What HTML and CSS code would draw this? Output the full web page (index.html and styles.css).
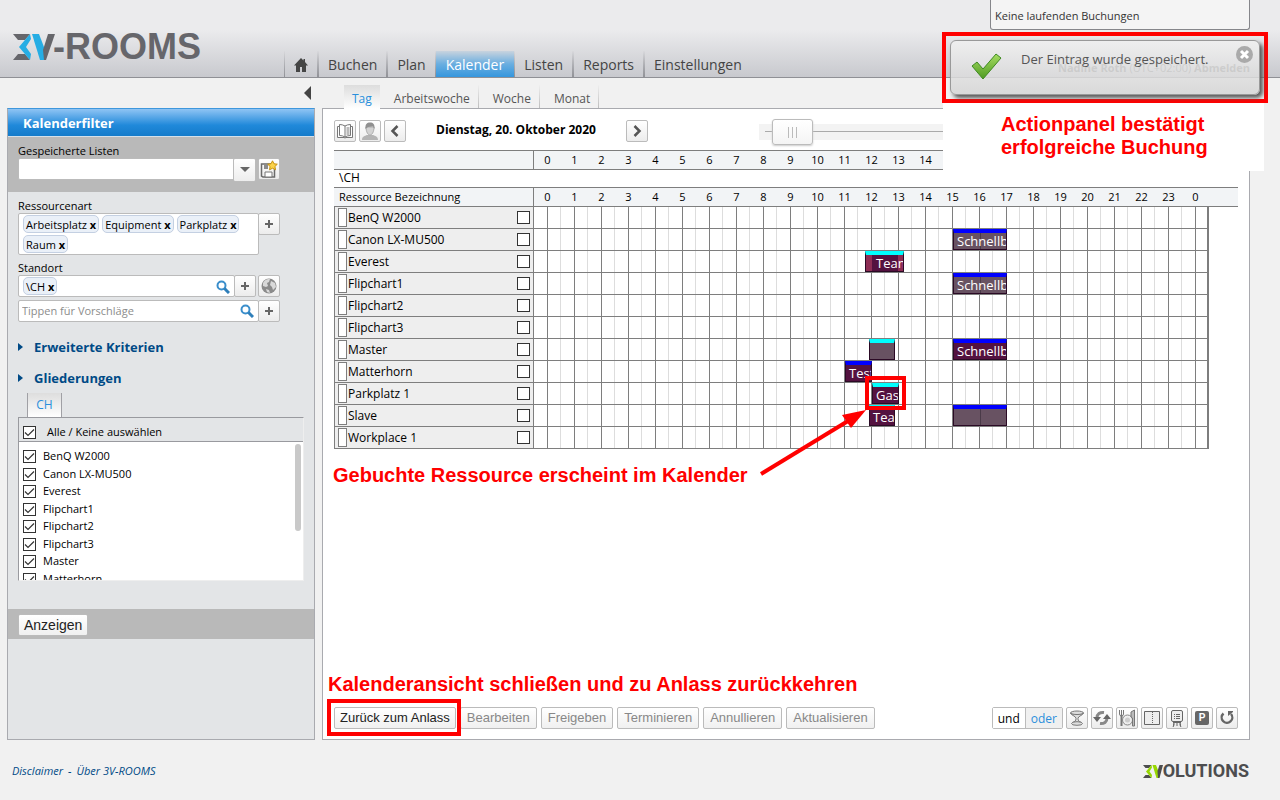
FILE: index.html
```html
<!DOCTYPE html>
<html lang="de">
<head>
<meta charset="utf-8">
<title>3V-ROOMS – Kalender</title>
<link rel="stylesheet" href="styles.css">
</head>
<body>
<header class="top">
  <a class="logo" href="#" aria-label="3V-ROOMS">
    <svg width="42" height="26" viewBox="0 0 42 26" aria-hidden="true">
      <path fill="#66666b" d="M0 0h17l-5 6H5zM0 26h17l-5-6H5z"/>
      <path fill="#26ade4" d="M17 0 6 13l11 13 1-6-5-7 5-8z"/>
      <path fill="#26ade4" d="M19 0h7l8 21-2 5h-5z"/>
      <path fill="#66666b" d="M35 0h7l-9 26h-2l-1-10z"/>
    </svg><span class="logo-text">-ROOMS</span>
  </a>
  <nav class="nav">
    <a class="nav-item nav-home" href="#" aria-label="Start"><svg width="14" height="14" viewBox="0 0 14 14"><path fill="#454545" d="M7 0 0 7.500h2V14h4V9h2v5h4V7.500h2L11 4V1H9.500v1.500z"/></svg></a>
    <a class="nav-item" href="#">Buchen</a>
    <a class="nav-item" href="#">Plan</a>
    <a class="nav-item active" href="#">Kalender</a>
    <a class="nav-item" href="#">Listen</a>
    <a class="nav-item" href="#">Reports</a>
    <a class="nav-item" href="#">Einstellungen</a>
  </nav>
  <div class="status">Keine laufenden Buchungen</div>
  <div class="user"><b>Nadine Roth</b> (UTC+02:00) <b>Abmelden</b></div>
</header>

<div class="work">
  <aside class="side">
    <button class="collapse" aria-label="Filter einklappen"></button>
    <div class="panel filter">
      <h2 class="filter-title">Kalenderfilter</h2>
      <div class="band saved">
        <label class="label" for="lists">Gespeicherte Listen</label>
        <div class="row">
          <span class="pick"><select id="lists"><option></option></select></span>
          <button class="icon-btn" aria-label="Liste speichern"><svg width="18" height="18" viewBox="0 0 18 18"><path fill="none" stroke="#6a6a6a" stroke-width="1.500" d="M11 4H1.500v12L3 17h11.500V8"/><path fill="#8b8b8b" d="M4 4h4v5H4z"/><path fill="#fff" stroke="#777" d="M5 12h7v5H5z"/><path fill="#fbd34a" stroke="#c8920f" d="m12.500.8 1.500 3 3.300.4-2.400 2.300.6 3.300-3-1.600-3 1.600.6-3.300-2.400-2.300 3.300-.4z"/></svg></button>
        </div>
      </div>
      <div class="fields">
        <span class="label">Ressourcenart</span>
        <div class="row tight">
          <div class="chips">
            <span class="chip">Arbeitsplatz <button aria-label="Arbeitsplatz entfernen">x</button></span>
            <span class="chip">Equipment <button aria-label="Equipment entfernen">x</button></span>
            <span class="chip">Parkplatz <button aria-label="Parkplatz entfernen">x</button></span>
            <span class="chip">Raum <button aria-label="Raum entfernen">x</button></span>
          </div>
          <button class="icon-btn plus" aria-label="Ressourcenart hinzufügen"></button>
        </div>
        <span class="label">Standort</span>
        <div class="row">
          <div class="join">
            <div class="chips single">
              <span class="chip">\CH <button aria-label="\CH entfernen">x</button></span>
              <svg class="lens" width="14" height="14" viewBox="0 0 14 14"><circle cx="5.500" cy="5.500" r="4" fill="none" stroke="#3a8ecb" stroke-width="2"/><path stroke="#2f7fba" stroke-width="3" d="m8.500 8.500 4.500 4.500"/></svg>
            </div>
            <button class="icon-btn plus" aria-label="Standort hinzufügen"></button>
          </div>
          <button class="icon-btn" aria-label="Karte"><svg width="16" height="16" viewBox="0 0 16 16"><circle cx="8" cy="8" r="7.500" fill="#8b8b8b"/><path fill="#d9d9d9" d="M2 5c2-4 5-4 7-4L8 4 6 5l1 3-2 1-3-1zM10 3l4 2 1 4-3 3-1-3-2-2zM5 11l3 1 1 3-3-1z"/></svg></button>
        </div>
        <div class="row tight suggest">
          <div class="search"><input type="text" aria-label="Suche" placeholder="Tippen für Vorschläge">
          <svg class="lens" width="14" height="14" viewBox="0 0 14 14"><circle cx="5.500" cy="5.500" r="4" fill="none" stroke="#3a8ecb" stroke-width="2"/><path stroke="#2f7fba" stroke-width="3" d="m8.500 8.500 4.500 4.500"/></svg></div>
          <button class="icon-btn plus" aria-label="Hinzufügen"></button>
        </div>
        <button class="fold">Erweiterte Kriterien</button>
        <button class="fold">Gliederungen</button>
        <a class="ch-tab" href="#">CH</a>
        <div class="tree">
          <label class="tree-all"><input type="checkbox" class="check" checked>Alle / Keine auswählen</label>
          <div class="tree-body">
            <ul class="tree-list">
              <li><label><input type="checkbox" class="check" checked>BenQ W2000</label></li>
              <li><label><input type="checkbox" class="check" checked>Canon LX-MU500</label></li>
              <li><label><input type="checkbox" class="check" checked>Everest</label></li>
              <li><label><input type="checkbox" class="check" checked>Flipchart1</label></li>
              <li><label><input type="checkbox" class="check" checked>Flipchart2</label></li>
              <li><label><input type="checkbox" class="check" checked>Flipchart3</label></li>
              <li><label><input type="checkbox" class="check" checked>Master</label></li>
              <li><label><input type="checkbox" class="check" checked>Matterhorn</label></li>
            </ul>
            <span class="thumb"></span>
          </div>
        </div>
      </div>
      <div class="band submit"><button class="btn dark">Anzeigen</button></div>
    </div>
  </aside>

  <main class="main">
    <nav class="tabs">
      <a class="tab active" href="#">Tag</a>
      <a class="tab" href="#">Arbeitswoche</a>
      <a class="tab" href="#">Woche</a>
      <a class="tab" href="#">Monat</a>
    </nav>
    <div class="panel view">
      <div class="tools">
        <button class="icon-btn" aria-label="Buch"><svg width="18" height="16" viewBox="0 0 18 16"><path fill="#fff" stroke="#777" d="M1.500 3.500h2v-2q3 0 5.500 1.500 2.500-1.500 5.500-1.500v2h2v11H10l-1 .5-1-.5H1.500z"/><path stroke="#777" fill="none" d="M9 3v11.500M3.500 3v9.500q3 0 5.500 1.500 2.500-1.500 5.500-1.500V3M10.500 5h3M10.500 7h3M10.500 9h3M10.500 11h3"/></svg></button>
        <button class="icon-btn" aria-label="Person"><svg width="18" height="18" viewBox="0 0 18 18"><path fill="#b4b4b4" d="M1 18c0-4 3-4 5-5h6c2 1 5 1 5 5z"/><path fill="#d2d2d2" stroke="#aaa" d="M5 5c0 5 2 8 4 8s4-3 4-8z"/><path fill="#8f8f8f" d="M4.500 7C4 2 6 .5 9 .5S14 2 13.500 7L12 4.500 7 5z"/></svg></button>
        <button class="icon-btn" aria-label="Zurück"><svg width="10" height="12" viewBox="0 0 10 12"><path fill="none" stroke="#555" stroke-width="2.500" d="M7.500 1 2.500 6l5 5"/></svg></button>
        <h1 class="date">Dienstag, 20. Oktober 2020</h1>
        <button class="icon-btn" aria-label="Weiter"><svg width="10" height="12" viewBox="0 0 10 12"><path fill="none" stroke="#555" stroke-width="2.500" d="m2.500 1 5 5-5 5"/></svg></button>
        <input class="zoom" type="range" min="0" max="100" value="3" aria-label="Zoom">
      </div>

      <div class="hours-head"><span class="head-name"></span><span class="hours"><i>0</i><i>1</i><i>2</i><i>3</i><i>4</i><i>5</i><i>6</i><i>7</i><i>8</i><i>9</i><i>10</i><i>11</i><i>12</i><i>13</i><i>14</i></span></div>
      <div class="site">\CH</div>
      <div class="hours-head"><span class="head-name">Ressource Bezeichnung</span><span class="hours"><i>0</i><i>1</i><i>2</i><i>3</i><i>4</i><i>5</i><i>6</i><i>7</i><i>8</i><i>9</i><i>10</i><i>11</i><i>12</i><i>13</i><i>14</i><i>15</i><i>16</i><i>17</i><i>18</i><i>19</i><i>20</i><i>21</i><i>22</i><i>23</i><i>0</i></span></div>
      <table class="grid">
        <tr><th><label class="res">BenQ W2000<input type="checkbox" class="check"></label></th><td></td></tr>
        <tr><th><label class="res">Canon LX-MU500<input type="checkbox" class="check"></label></th><td><div class="lane"><span class="event faded blue" style="--start:419px;--len:54px">Schnellbuchung</span></div></td></tr>
        <tr><th><label class="res">Everest<input type="checkbox" class="check"></label></th><td><div class="lane"><span class="event buffer cyan" style="--start:331px;--len:39px">Team</span></div></td></tr>
        <tr><th><label class="res">Flipchart1<input type="checkbox" class="check"></label></th><td><div class="lane"><span class="event faded blue" style="--start:419px;--len:54px">Schnellbuchung</span></div></td></tr>
        <tr><th><label class="res">Flipchart2<input type="checkbox" class="check"></label></th><td></td></tr>
        <tr><th><label class="res">Flipchart3<input type="checkbox" class="check"></label></th><td></td></tr>
        <tr><th><label class="res">Master<input type="checkbox" class="check"></label></th><td><div class="lane"><span class="event faded cyan" style="--start:335px;--len:26px"></span><span class="event blue" style="--start:419px;--len:54px">Schnellbuchung</span></div></td></tr>
        <tr><th><label class="res">Matterhorn<input type="checkbox" class="check"></label></th><td><div class="lane"><span class="event blue" style="--start:311px;--len:27px">Test</span></div></td></tr>
        <tr><th><label class="res">Parkplatz 1<input type="checkbox" class="check"></label></th><td><div class="lane"><span class="event cyan" style="--start:338px;--len:27px">Gast</span><span class="mark mark-event"></span></div></td></tr>
        <tr><th><label class="res">Slave<input type="checkbox" class="check"></label></th><td><div class="lane"><span class="event cyan" style="--start:335px;--len:26px">Tea</span><span class="event faded blue" style="--start:419px;--len:54px"></span></div></td></tr>
        <tr><th><label class="res">Workplace 1<input type="checkbox" class="check"></label></th><td></td></tr>
      </table>
      <div class="hint-line">
        <p class="hint">Gebuchte Ressource erscheint im Kalender</p>
        <svg class="arrow" width="108" height="68" viewBox="0 0 108 68" aria-hidden="true"><path stroke="#f00" stroke-width="4" d="M1 65 88 12"/><path fill="#f00" d="M106 1 82 6l9 13z"/></svg>
      </div>

      <p class="hint bottom">Kalenderansicht schließen und zu Anlass zurückkehren</p>
      <div class="actions">
        <span class="marked"><button class="btn dark">Zurück zum Anlass</button><span class="mark mark-btn"></span></span>
        <button class="btn">Bearbeiten</button>
        <button class="btn">Freigeben</button>
        <button class="btn">Terminieren</button>
        <button class="btn">Annullieren</button>
        <button class="btn">Aktualisieren</button>
        <span class="toggle"><button>und</button><button class="on">oder</button></span>
        <button class="icon-btn" aria-label="Getränke"><svg width="16" height="16" viewBox="0 0 16 16"><g fill="#ddd" stroke="#777"><ellipse cx="8" cy="3" rx="6.500" ry="2"/><path d="M1.500 3C3 6 7 6 7 8.500S6 11 4 12.500h8C10 11 9 11 9 8.500S13 6 14.500 3C13 5 3 5 1.500 3z"/><ellipse cx="8" cy="13.500" rx="5.500" ry="1.800"/></g></svg></button>
        <button class="icon-btn" aria-label="Wiederholen"><svg width="18" height="16" viewBox="0 0 18 16"><path fill="none" stroke="#888" stroke-width="3" d="M4 8c0-4 3-6 7-5.500M14 8c0 4-3 6-7 5.500"/><path fill="#666" d="M0 7h8l-4 5zM10 9h8l-4-5z"/></svg></button>
        <button class="icon-btn" aria-label="Verpflegung"><svg width="18" height="18" viewBox="0 0 18 18"><path fill="none" stroke="#777" d="M1.500 1v4q0 2 2 2t2-2V1M3.500 1v5"/><path stroke="#777" stroke-width="2" d="M3.500 6v11"/><circle cx="9.500" cy="11" r="5" fill="#eee" stroke="#888"/><circle cx="9.500" cy="11" r="2.500" fill="#ccc"/><path fill="#bbb" stroke="#777" d="M14.500 17V9L13 8V3l3.500-2v16z"/></svg></button>
        <button class="icon-btn" aria-label="Raumteilung"><svg width="16" height="14" viewBox="0 0 16 14"><path fill="#eee" stroke="#666" d="M.5.500h15v13H.5z"/><path stroke="#666" stroke-dasharray="1 1" d="M8.500 1v12"/></svg></button>
        <button class="icon-btn" aria-label="Flipchart"><svg width="12" height="18" viewBox="0 0 12 18"><rect x=".5" y="1.500" width="11" height="11" rx="1.500" fill="#eee" stroke="#666"/><path stroke="#666" d="M2 13.500h8M3 13v3l-1 2M9 13v3l1 2M6 13v4M3 5.500h1M5 5.500h4M3 7.500h1M5 7.500h4M3 9.500h1M5 9.500h4"/></svg></button>
        <button class="icon-btn" aria-label="Parkplatz"><span class="park">P</span></button>
        <button class="icon-btn" aria-label="Zurücksetzen"><svg width="14" height="14" viewBox="0 0 14 14"><path fill="none" stroke="#666" stroke-width="2.400" d="M3.500 2.500a5.300 5.300 0 1 0 7.500.5"/><path fill="#666" d="M8 0h5v1L8 5z"/></svg></button>
      </div>
      <div class="callout">Actionpanel bestätigt<br>erfolgreiche Buchung</div>
    </div>
  </main>
</div>

<footer class="foot">
  <span class="legal"><a href="#">Disclaimer</a><span>-</span><a href="#">Über 3V-ROOMS</a></span>
  <a class="vendor" href="#" aria-label="3VOLUTIONS">
    <svg width="20" height="13" viewBox="0 0 40 26" aria-hidden="true"><path fill="#4d4d4f" d="M0 0h17l-5 6H5zM0 26h17l-5-6H5z"/><path fill="#97d700" d="M17 0 6 13l11 13 1-6-5-7 5-8zM19 0h7l8 21-2 5h-5z"/><path fill="#4d4d4f" d="M33 0h7l-7 26h-3l-1-14z"/></svg><span class="vendor-text">OLUTIONS</span>
  </a>
</footer>

<div class="toast-frame">
  <div class="toast" role="status">
    <svg width="32" height="28" viewBox="0 0 32 28" aria-hidden="true"><defs><linearGradient id="g" x2="0" y2="1"><stop offset="0" stop-color="#a6dd62"/><stop offset="1" stop-color="#4f9a22"/></linearGradient></defs><path fill="url(#g)" stroke="#3f8a22" d="m1 13 5-4 6 7L25 1l5 4-18 21z"/></svg>
    <p>Der Eintrag wurde gespeichert.</p>
    <button class="close" aria-label="Schließen"><svg width="17" height="17" viewBox="0 0 17 17"><circle cx="8.500" cy="8.500" r="8.500" fill="#aaa"/><path stroke="#fff" stroke-width="3" d="m5 5 7 7M12 5l-7 7"/></svg></button>
  </div>
</div>
</body>
</html>
```
FILE: styles.css
```css
* { box-sizing: border-box; }

body {
  margin: 0;
  min-height: 100vh;
  display: flex;
  flex-direction: column;
  position: relative;
  background: #f1f1f1;
  color: #000;
  font: 12px/16px "Open Sans", "Noto Sans", sans-serif;
}

a { color: inherit; text-decoration: none; }
p, h1, h2, ul { margin: 0; padding: 0; }
button { font: inherit; color: inherit; padding: 0; cursor: pointer; }
svg { display: block; flex: none; }

/* Header */
.top {
  height: 78px;
  display: flex;
  align-items: flex-end;
  position: relative;
  padding-left: 13px;
  background: linear-gradient(#ebebed 0, #ebebed 30px, #c8c9ce 77px);
  border-bottom: 1px solid #8f9095;
}
.logo { display: flex; align-items: center; width: 271px; height: 60px; color: #66666b; }
.logo-text { margin-left: -2px; font: bold 36px/40px "Liberation Sans", Arial, sans-serif; }
.nav { display: flex; font-size: 14px; color: #444; }
.nav-item {
  height: 26px;
  padding: 0 9px;
  line-height: 28px;
  border-left: 1px solid #fff;
  border-right: 1px solid #999a9f;
  border-image: linear-gradient(transparent, #8f9095) 1;
}
.nav-item:last-child { border-right: 0; }
.nav-home { padding: 7px 9px 0; }
.nav-item.active { color: #fff; background: linear-gradient(#c8d3de, #6aaee0 50%, #3596dd); border-image: none; border-color: transparent; }
.status {
  position: absolute;
  top: 0;
  right: 30px;
  width: 260px;
  height: 30px;
  padding: 8px 4px;
  font-size: 11px;
  color: #333;
  background: #f4f4f4;
  border: 1px solid #85868a;
  border-top: 0;
  border-radius: 0 0 3px 3px;
}
.user { position: absolute; right: 30px; bottom: 1px; font-size: 11px; color: #555; }

/* Columns */
.work { flex: 1; display: flex; padding: 0 30px 0 7px; gap: 7px; }
.side { width: 308px; display: flex; flex-direction: column; }
.main { flex: 1; min-width: 0; display: flex; flex-direction: column; }
.panel { flex: 1; display: flex; flex-direction: column; border: 1px solid #a9aaaf; }
.collapse {
  align-self: flex-end;
  width: 7px;
  height: 14px;
  margin: 8px 4px;
  border: solid transparent;
  border-width: 7px 7px 7px 0;
  border-right-color: #444;
  background: none;
}

/* Filter */
.filter { background: #e3e5e7; border-top: 1px solid #3e97dc; }
.filter-title {
  height: 28px;
  padding-left: 15px;
  color: #fff;
  font-size: 13px;
  line-height: 29px;
  background: linear-gradient(#8fc4f4, #2089da 60%, #147bca);
  border-bottom: 1px solid #d4e0ea;
}
.band { background: #b9b9b9; padding: 0 10px; }
.saved { height: 55px; padding-top: 5px; }
.label { display: block; height: 16px; line-height: 18px; font-size: 11px; }
.row { display: flex; gap: 2px; align-items: flex-start; }
.row.tight { gap: 0; }
.join { display: flex; }
.pick { position: relative; width: 238px; height: 22px; }
.pick select { appearance: none; width: 100%; height: 22px; border: 1px solid #bbb; border-radius: 2px; background: #fff; }
.pick::before { content: ""; position: absolute; right: 0; top: 0; width: 21px; height: 22px; background: linear-gradient(#fff, #ededed); border: 1px solid #bbb; border-radius: 2px; pointer-events: none; }
.pick::after { content: ""; position: absolute; right: 6px; top: 9px; border: 5px solid transparent; border-top-color: #666; border-bottom: 0; pointer-events: none; }
.icon-btn {
  flex: none;
  width: 22px;
  height: 22px;
  display: flex;
  align-items: center;
  justify-content: center;
  border: 1px solid #bbb;
  border-radius: 2px;
  background: linear-gradient(#fff, #ececec);
}
.plus::before {
  content: "";
  width: 8px;
  height: 8px;
  background: linear-gradient(#666, #666) 50% 50% / 8px 2px no-repeat, linear-gradient(#666, #666) 50% 50% / 2px 8px no-repeat;
}
.fields { padding: 5px 10px 0; }
.chips {
  display: flex;
  flex-wrap: wrap;
  align-content: flex-start;
  gap: 2px 3px;
  width: 241px;
  min-height: 42px;
  padding: 1px 4px;
  background: #fff;
  border: 1px solid #bbb;
  border-radius: 2px;
}
.chips.single { width: 217px; min-height: 22px; height: 22px; justify-content: space-between; }
.chips + .icon-btn { margin-left: -1px; }
.chip {
  height: 18px;
  padding: 0 2px;
  line-height: 17px;
  font-size: 11px;
  background: #eaf0f8;
  border: 1px solid #c4d0e2;
  border-radius: 5px;
}
.chip button { border: 0; background: none; font-weight: bold; line-height: 12px; }
.lens { margin: 3px 0 0; }
.tight + .label { margin-top: 4px; line-height: 17px; }
.suggest { margin-top: 3px; }
.search { display: flex; width: 241px; height: 22px; padding-right: 4px; background: #fff; border: 1px solid #bbb; border-radius: 2px; }
.search + .icon-btn { margin-left: -1px; }
.search input { flex: 1; min-width: 0; border: 0; padding: 0 3px; font: inherit; font-size: 11px; background: none; }
.search input::placeholder { color: #8c8c8c; }
.fold {
  display: flex;
  align-items: center;
  gap: 11px;
  height: 31px;
  border: 0;
  background: none;
  color: #004a86;
  font-weight: bold;
  font-size: 13px;
}
.suggest + .fold { margin-top: 9px; }
.fold::before { content: ""; border: 4px solid transparent; border-left: 5px solid #004a86; border-right: 0; }
.ch-tab {
  display: block;
  width: 35px;
  height: 24px;
  margin-left: 9px;
  color: #2a8fdc;
  line-height: 24px;
  text-align: center;
  background: linear-gradient(#ddd, #fff);
  border: solid #a0a0a5;
  border-width: 0 1px;
}
.tree { width: 286px; height: 164px; border: 1px solid #999a9f; border-right-color: #eee; border-bottom-color: #eee; }
.tree-all { display: flex; align-items: center; gap: 11px; height: 24px; padding: 5px 4px 0; border-bottom: 1px solid #999a9f; font-size: 11px; }
.tree-body { position: relative; height: 138px; padding-top: 5px; overflow: hidden; background: #fff; }
.tree-list { list-style: none; }
.tree-list li { height: 18px; }
.tree-list li:nth-child(even) { height: 17px; }
.tree-list label { display: flex; align-items: center; gap: 7px; height: 18px; padding-left: 4px; font-size: 11px; }
.thumb { position: absolute; top: 2px; right: 2px; width: 6px; height: 87px; border-radius: 3px; background: #c9c9c9; }
.check {
  appearance: none;
  flex: none;
  width: 13px;
  height: 13px;
  margin: 0;
  background: #fff;
  border: 1px solid #333;
}
.check:checked {
  background: #fff url("data:image/svg+xml,%3Csvg xmlns='http://www.w3.org/2000/svg' viewBox='0 0 11 11'%3E%3Cpath fill='none' stroke='%23333' stroke-width='1.2' d='M1 5.500 4 8.500 10 2.500'/%3E%3C/svg%3E") center / 11px 11px no-repeat;
}
.submit { height: 30px; margin-top: 28px; padding-top: 5px; }

/* Buttons */
.btn {
  height: 22px;
  padding: 0 6px;
  font: 13px/20px "Liberation Sans", Arial, sans-serif;
  color: #888;
  background: linear-gradient(#fff, #f0f0f0);
  border: 1px solid #bbb;
  border-radius: 2px;
  white-space: nowrap;
}
.btn.dark { color: #222; padding: 0 5px; }
.submit .btn { font-size: 14px; }

/* View tabs */
.tabs { display: flex; height: 31px; margin-bottom: -1px; padding: 7px 0 0 22px; color: #555; position: relative; z-index: 1; }
.tab { padding: 0 8px; line-height: 27px; margin-left: 6px; border-right: 1px solid #ccc; border-image: linear-gradient(transparent, #bbb) 1; height: 23px; }
.tab.active { margin: 0; height: 24px; color: #2a8fdc; border: 0; background: linear-gradient(#ddd, #fff); }

/* Calendar */
.view { position: relative; padding: 11px 11px 10px; background: #fff; }
.tools { display: flex; gap: 3px; height: 30px; align-items: flex-start; }
.date { width: 214px; text-align: center; font-size: 12px; line-height: 20px; }
.zoom { appearance: none; flex: 1; height: 16px; margin: 4px 0 0 108px; background: linear-gradient(#aaa, #aaa) 6px 7px / 100% 1px no-repeat, #f3f3f3; }
.zoom::-webkit-slider-thumb {
  appearance: none;
  width: 41px;
  height: 26px;
  border: 1px solid #bbb;
  border-radius: 3px;
  background: repeating-linear-gradient(90deg, #bbb 0 1px, transparent 1px 4px) 50% 50% / 9px 11px no-repeat, linear-gradient(#fff, #f4f4f4);
  box-shadow: 0 1px 2px #ccc;
}
.hours-head { display: flex; height: 20px; background: #f2f4f6; border: solid #7e7e7e; border-width: 1px 0; line-height: 17px; font-size: 11px; }
.head-name { width: 200px; padding-left: 5px; border-right: 1px solid #7e7e7e; }
.hours { display: flex; }
.hours i { width: 27px; text-align: center; font-style: normal; }
.site { height: 17px; padding-left: 5px; line-height: 15px; }
.grid { width: 875px; border-collapse: separate; border-spacing: 0; table-layout: fixed; border-left: 1px solid #7e7e7e; border-right: 2px solid #7e7e7e; }
.grid th { width: 199px; height: 22px; padding: 0; font-weight: normal; text-align: left; background: #eee; border: solid #7e7e7e; border-width: 0 1px 1px 0; }
.grid td {
  height: 22px;
  padding: 0;
  vertical-align: top;
  border-bottom: 1px solid #7e7e7e;
  background:
    linear-gradient(90deg, #7e7e7e 1px, transparent 1px) 13px 0 / 27px 100%,
    linear-gradient(90deg, #ddd 1px, transparent 1px) 26px 0 / 27px 100%;
}
.res { display: flex; align-items: center; height: 21px; padding: 0 3px; line-height: 18px; }
.res::before { content: ""; width: 7px; height: 17px; margin-right: 1px; background: #fff; border: 1px solid #7e7e7e; }
.res .check { margin-left: auto; }
.lane { position: relative; height: 21px; }
.event {
  position: absolute;
  left: var(--start);
  top: 0;
  width: var(--len);
  height: 21px;
  padding-left: 3px;
  overflow: hidden;
  white-space: nowrap;
  color: #fff;
  font-size: 13px;
  line-height: 17px;
  background: #541240;
  border: 1px solid #2b0a25;
  border-top: 4px solid;
}
.event.faded { background: linear-gradient(90deg, transparent 26px, #4a3a48 26px 27px, transparent 27px), #685262; }
.event.buffer { padding-left: 10px; background: linear-gradient(90deg, #8d2d54 6px, #541240 6px 32px, #8d2d54 32px); }
.event.blue { border-top-color: #00f; }
.event.cyan { border-top-color: #0ff; }
.mark { position: absolute; border: 4px solid #f00; pointer-events: none; }
.mark-event { left: 331px; top: -7px; width: 41px; height: 34px; z-index: 1; }
.hint { color: #f00; font: bold 20px/24px "Liberation Sans", Arial, sans-serif; white-space: nowrap; }
.hint-line { position: relative; display: flex; margin: 14px 0 0 -1px; }
.arrow { position: absolute; left: 427px; top: -54px; }
.hint.bottom { margin: auto 0 11px -6px; }
.actions { display: flex; gap: 3px; }
.actions .btn:not(.dark) { margin-left: 1px; }
.marked { position: relative; }
.mark-btn { inset: -8px -5px -7px -7px; }
.toggle { display: flex; height: 22px; margin-left: auto; border: 1px solid #bbb; border-radius: 2px; }
.toggle button { border: 0; padding: 0 5px; background: #fff; line-height: 22px; }
.toggle .on { color: #2a8fdc; background: #f0f0f0; border-left: 1px solid #bbb; }
.park { width: 14px; height: 14px; border-radius: 2px; background: #666; color: #fff; font: bold 10px/14px "Liberation Sans", sans-serif; }
.callout {
  position: absolute;
  top: -7px;
  right: -15px;
  width: 321px;
  height: 69px;
  padding: 11px 0 0 58px;
  color: #f00;
  background: #fff;
  font: bold 20px/23px "Liberation Sans", Arial, sans-serif;
  white-space: nowrap;
  z-index: 1;
}

/* Toast */
.toast-frame { position: absolute; z-index: 2; top: 32px; right: 12px; width: 326px; padding: 4px 2px 4px 4px; border: 4px solid #f00; }
.toast {
  display: flex;
  width: 310px;
  height: 55px;
  padding: 12px 6px 0 20px;
  background: linear-gradient(#f0f0f0e0, #d4d4d4d0);
  border: 1px solid #999;
  border-radius: 6px;
  box-shadow: 3px 3px 4px #555;
}
.toast p { margin-left: 18px; font-size: 13px; line-height: 13px; color: #555; white-space: nowrap; }
.close { margin: -7px 0 0 auto; border: 0; background: none; width: 17px; height: 17px; }

/* Footer */
.foot { height: 60px; display: flex; justify-content: space-between; align-items: center; padding: 2px 31px 0 12px; }
.legal { display: flex; gap: 5px; font-size: 11px; line-height: 14px; font-style: italic; color: #004a86; }
.vendor { display: flex; align-items: center; color: #4d4d4f; }
.vendor-text { font: bold 18px/20px Roboto, sans-serif; }
```
